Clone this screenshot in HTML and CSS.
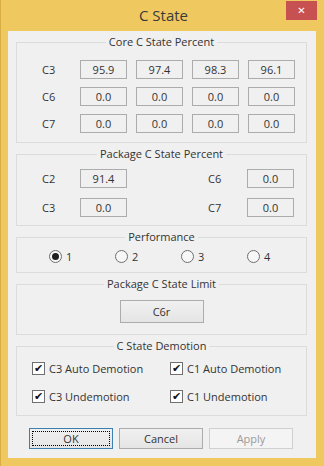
FILE: index.html
```html
<!DOCTYPE html>
<html lang="en">

<head>
    <meta charset="UTF-8">
    <title>C State</title>
    <link rel="stylesheet" href="styles.css">
</head>

<body>
    <div class="window">
        <!-- Barra de titulo -->
        <div class="title-bar">
            <span></span>
            <span class="title">C State</span>
            <button class="close-button">&#x2715;</button>
        </div>

        <div class="client">
            <fieldset class="group">
                <legend>Core C State Percent</legend>
                <div class="core-grid">
                    <span class="lbl">C3</span>
                    <span class="value">95.9</span>
                    <span class="value">97.4</span>
                    <span class="value">98.3</span>
                    <span class="value">96.1</span>
                    <span class="lbl">C6</span>
                    <span class="value">0.0</span>
                    <span class="value">0.0</span>
                    <span class="value">0.0</span>
                    <span class="value">0.0</span>
                    <span class="lbl">C7</span>
                    <span class="value">0.0</span>
                    <span class="value">0.0</span>
                    <span class="value">0.0</span>
                    <span class="value">0.0</span>
                </div>
            </fieldset>

            <fieldset class="group">
                <legend>Package C State Percent</legend>
                <div class="package-grid">
                    <span class="lbl">C2</span>
                    <span class="value">91.4</span>
                    <span></span>
                    <span class="lbl">C6</span>
                    <span class="value">0.0</span>
                    <span class="lbl">C3</span>
                    <span class="value">0.0</span>
                    <span></span>
                    <span class="lbl">C7</span>
                    <span class="value">0.0</span>
                </div>
            </fieldset>

            <fieldset class="group">
                <legend>Performance</legend>
                <div class="radio-row">
                    <label class="option"><span class="radio checked"></span>1</label>
                    <label class="option"><span class="radio"></span>2</label>
                    <label class="option"><span class="radio"></span>3</label>
                    <label class="option"><span class="radio"></span>4</label>
                </div>
            </fieldset>

            <fieldset class="group">
                <legend>Package C State Limit</legend>
                <div class="limit-row">
                    <button class="win-button limit-button">C6r</button>
                </div>
            </fieldset>

            <fieldset class="group">
                <legend>C State Demotion</legend>
                <div class="check-grid">
                    <label class="option"><span class="check">&#x2714;</span>C3 Auto Demotion</label>
                    <label class="option"><span class="check">&#x2714;</span>C1 Auto Demotion</label>
                    <label class="option"><span class="check">&#x2714;</span>C3 Undemotion</label>
                    <label class="option"><span class="check">&#x2714;</span>C1 Undemotion</label>
                </div>
            </fieldset>

            <!-- Botones inferiores -->
            <div class="dialog-buttons">
                <button class="win-button default"><span class="focus">OK</span></button>
                <button class="win-button">Cancel</button>
                <button class="win-button disabled">Apply</button>
            </div>
        </div>
    </div>
</body>

</html>
```

FILE: styles.css
```css
/* Estilos generales */
body {
    margin: 0;
    background: #f0c860;
    font-family: 'Open Sans', 'Noto Sans', sans-serif;
    font-size: 11px;
    color: #333;
}

.window {
    width: 324px;
    height: 466px;
    box-sizing: border-box;
    background: #f0c860;
    border-left: 1px solid #d9ae45;
    display: flex;
    flex-direction: column;
}

/* Barra de titulo */
.title-bar {
    height: 31px;
    display: grid;
    grid-template-columns: 1fr auto 1fr;
    align-items: start;
}

.title {
    font-size: 15px;
    line-height: 31px;
    color: #3a3a3a;
    padding-left: 2px;
}

.close-button {
    justify-self: end;
    margin: 1px 7px 0 0;
    width: 31px;
    height: 19px;
    padding: 0;
    border: none;
    background: #c75050;
    color: #fff;
    font-size: 10px;
    font-weight: bold;
    line-height: 19px;
    font-family: 'DejaVu Sans', sans-serif;
}

.client {
    flex: 1;
    margin: 0 8px 8px 7px;
    background: #f0f0f0;
    padding: 0 9px 0 8px;
}

/* Grupos */
.group {
    margin: 4px 0 0;
    padding: 0;
    border: 1px solid #dcdcdc;
    min-inline-size: 0;
}

.group legend {
    margin: 0 auto;
    padding: 0 3px;
    line-height: 14px;
}

.lbl {
    line-height: 19px;
}

.value {
    height: 19px;
    box-sizing: border-box;
    border: 1px solid #acacac;
    background: #f0f0f0;
    text-align: center;
    line-height: 17px;
}

.core-grid {
    display: grid;
    grid-template-columns: 29px repeat(4, 47px);
    column-gap: 9px;
    row-gap: 8px;
    padding: 11px 0 9px 25px;
}

.package-grid {
    display: grid;
    grid-template-columns: 29px 47px 63px 30px 47px;
    column-gap: 9px;
    row-gap: 10px;
    padding: 8px 0 8px 25px;
}

/* Radios y checkboxes */
.option {
    display: flex;
    align-items: center;
    gap: 4px;
    height: 13px;
}

.radio {
    width: 13px;
    height: 13px;
    box-sizing: border-box;
    border: 1px solid #6f6f6f;
    border-radius: 50%;
    background: #f7f7f7;
    display: flex;
    align-items: center;
    justify-content: center;
}

.radio.checked::after {
    content: "";
    width: 7px;
    height: 7px;
    border-radius: 50%;
    background: #1f1f1f;
}

.radio-row {
    display: grid;
    grid-template-columns: repeat(4, 66px);
    padding: 6px 0 9px 32px;
}

.limit-row {
    display: flex;
    justify-content: center;
    padding: 9px 0 11px;
}

.check {
    width: 13px;
    height: 13px;
    box-sizing: border-box;
    border: 1px solid #707070;
    background: #fff;
    color: #111;
    font-family: 'DejaVu Sans', sans-serif;
    font-size: 11px;
    line-height: 11px;
    text-align: center;
}

.check-grid {
    display: grid;
    grid-template-columns: repeat(2, 138px);
    row-gap: 15px;
    padding: 9px 0 12px 15px;
}

/* Botones */
.win-button {
    font-family: inherit;
    font-size: 11px;
    color: #333;
    width: 84px;
    height: 21px;
    padding: 0;
    border: 1px solid #acacac;
    background: linear-gradient(#f0f0f0, #e5e5e5);
}

.limit-button {
    height: 23px;
}

.dialog-buttons {
    display: flex;
    gap: 6px;
    margin: 12px 0 0 13px;
}

.win-button.default {
    border-color: #3c7fb1;
    padding: 2px;
}

.win-button .focus {
    display: block;
    height: 100%;
    box-sizing: border-box;
    border: 1px dotted #000;
    line-height: 13px;
}

.win-button.disabled {
    color: #9a9a9a;
    border-color: #d0d0d0;
    background: #f4f4f4;
}
```
